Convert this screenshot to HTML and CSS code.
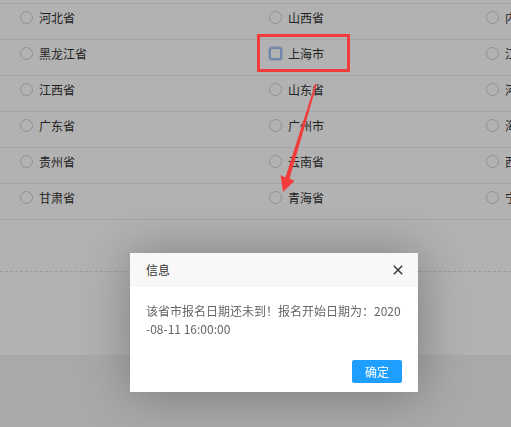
FILE: index.html
```html
<!DOCTYPE html>
<html lang="zh-CN">
<head>
<meta charset="utf-8">
<title>信息</title>
<link rel="stylesheet" href="styles.css">
</head>
<body>
<div class="page">
  <div class="panel">
    <div class="grid">
      <div class="row">
        <label class="cell"><span class="radio"></span><span class="name">河北省</span></label>
        <label class="cell"><span class="radio"></span><span class="name">山西省</span></label>
        <label class="cell"><span class="radio"></span><span class="name">内蒙古自治区</span></label>
      </div>
      <div class="row">
        <label class="cell"><span class="radio"></span><span class="name">黑龙江省</span></label>
        <label class="cell"><span class="radio focus"></span><span class="name">上海市</span></label>
        <label class="cell"><span class="radio"></span><span class="name">江苏省</span></label>
      </div>
      <div class="row">
        <label class="cell"><span class="radio"></span><span class="name">江西省</span></label>
        <label class="cell"><span class="radio"></span><span class="name">山东省</span></label>
        <label class="cell"><span class="radio"></span><span class="name">河南省</span></label>
      </div>
      <div class="row">
        <label class="cell"><span class="radio"></span><span class="name">广东省</span></label>
        <label class="cell"><span class="radio"></span><span class="name">广州市</span></label>
        <label class="cell"><span class="radio"></span><span class="name">海南省</span></label>
      </div>
      <div class="row">
        <label class="cell"><span class="radio"></span><span class="name">贵州省</span></label>
        <label class="cell"><span class="radio"></span><span class="name">云南省</span></label>
        <label class="cell"><span class="radio"></span><span class="name">西藏自治区</span></label>
      </div>
      <div class="row">
        <label class="cell"><span class="radio"></span><span class="name">甘肃省</span></label>
        <label class="cell"><span class="radio"></span><span class="name">青海省</span></label>
        <label class="cell"><span class="radio"></span><span class="name">宁夏回族自治区</span></label>
      </div>
    </div>
    <div class="divider"></div>
  </div>
</div>

<div class="mask"></div>

<svg class="annot" width="511" height="427" viewBox="0 0 511 427">
  <rect x="258.5" y="35.5" width="90" height="35" fill="none" stroke="#f23c3c" stroke-width="3"/>
  <polygon fill="#f23c3c" points="316.8,84.2 289.6,178.6 294.5,181 283,192 280.5,175 285.4,177.4 315.2,83.8"/>
</svg>

<div class="dialog">
  <div class="dialog-head">
    <span class="dialog-title">信息</span>
    <svg class="close" width="10" height="10" viewBox="0 0 10 10">
      <path d="M0.8 0.8 L9.2 9.2 M9.2 0.8 L0.8 9.2" stroke="#333" stroke-width="1.4" fill="none"/>
    </svg>
  </div>
  <div class="dialog-body">该省市报名日期还未到！报名开始日期为：2020<br>-08-11 16:00:00</div>
  <div class="dialog-foot"><span class="btn">确定</span></div>
</div>
</body>
</html>
```

FILE: styles.css
```css
html, body {
  margin: 0;
  padding: 0;
}
body {
  width: 511px;
  height: 427px;
  overflow: hidden;
  background: #f2f2f2;
  font-family: "Noto Sans CJK SC", "Noto Sans", "Liberation Sans", sans-serif;
  font-size: 12px;
  color: #333;
}
.page {
  width: 511px;
}
.panel {
  background: #fff;
  height: 355px;
  padding-top: 3px;
  box-sizing: border-box;
}
.grid {
  border-top: 1px solid #ececec;
}
.row {
  display: grid;
  grid-template-columns: 249px 217px 1fr;
  height: 35px;
  border-bottom: 1px solid #ececec;
}
.cell {
  display: flex;
  align-items: center;
  padding: 5px 0 0 20px;
  align-self: start;
  white-space: nowrap;
  min-width: 0;
}
.radio {
  flex: none;
  width: 13px;
  height: 13px;
  box-sizing: border-box;
  border: 1px solid #cfcfcf;
  border-radius: 50%;
}
.radio.focus {
  border-radius: 3px;
  border: 2px solid #9fbff5;
  box-shadow: 0 0 0 1px rgba(159, 191, 245, 0.45);
}
.name {
  margin-left: 6px;
  line-height: 17px;
  color: #333;
}
.divider {
  margin-top: 51px;
  border-top: 1px dashed #dedede;
}
.mask {
  position: fixed;
  left: 0;
  top: 0;
  right: 0;
  bottom: 0;
  background: rgba(0, 0, 0, 0.3);
}
.annot {
  position: absolute;
  left: 0;
  top: 0;
  pointer-events: none;
}
.dialog {
  position: absolute;
  left: 130px;
  top: 253px;
  width: 288px;
  background: #fff;
  box-shadow: 1px 1px 50px rgba(0, 0, 0, 0.3);
}
.dialog-head {
  background: #f8f8f8;
  border-bottom: 1px solid #eee;
  display: flex;
  align-items: center;
  justify-content: space-between;
  padding: 1px 15px 0 16px;
  height: 31px;
}
.dialog-title {
  font-size: 12px;
  color: #333;
}
.close {
  display: block;
}
.dialog-body {
  padding: 16px 16px 22px;
  line-height: 18px;
  color: #666;
  white-space: nowrap;
}
.dialog-foot {
  display: flex;
  justify-content: flex-end;
  padding: 0 16px 9px;
}
.btn {
  display: block;
  width: 50px;
  height: 23px;
  line-height: 23px;
  text-align: center;
  background: #1e9fff;
  color: #fff;
  border-radius: 2px;
  font-size: 12px;
}
```
